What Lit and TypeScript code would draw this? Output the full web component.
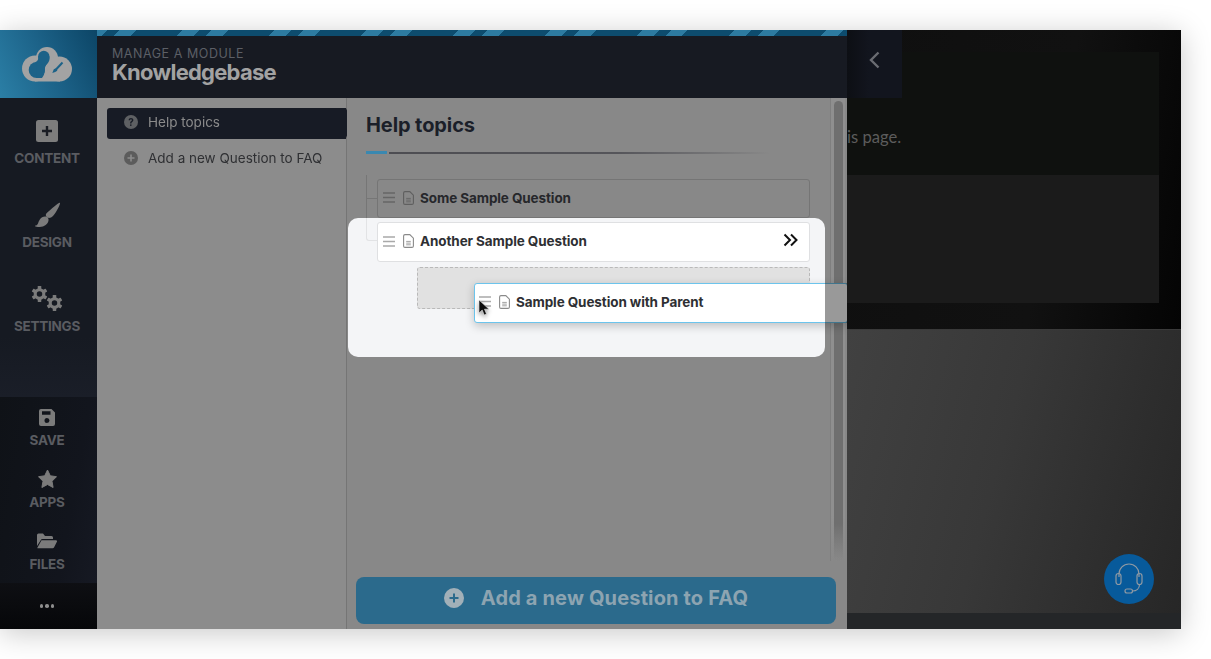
import { LitElement, html, svg, css } from "lit";
import { customElement } from "lit/decorators.js";

const gear = (cx: number, cy: number, r: number) => svg`
  <g transform="translate(${cx} ${cy})">
    ${[0, 60, 120, 180, 240, 300].map(
      (a) => svg`<rect x=${-r * 0.24} y=${-r * 1.08} width=${r * 0.48} height=${r * 0.6} rx="0.6" transform="rotate(${a})"></rect>`
    )}
    <circle r=${r * 0.58} fill="none" stroke="currentColor" stroke-width=${r * 0.42}></circle>
  </g>`;

const handle = () => html`<svg class="handle" width="12" height="11" viewBox="0 0 12 11"><path d="M0 1h12M0 5.500h12M0 10h12" stroke="currentColor" stroke-width="1.400" fill="none"></path></svg>`;
const doc = () => html`<svg class="doc" width="11" height="14" viewBox="0 0 11 14"><path d="M2 .6h4.800l3.600 3.600v7.700a1.500 1.500 0 0 1-1.500 1.500H2a1.500 1.500 0 0 1-1.400-1.500V2.100A1.500 1.500 0 0 1 2 .6z" fill="none" stroke="currentColor" stroke-width="1.100"></path><path d="M3.200 7.400h4.600M3.200 9.100h4.600M3.200 10.800h4.600" stroke="currentColor" stroke-width=".8"></path></svg>`;

@customElement("app-root")
export class AppRoot extends LitElement {
  static styles = css`
    :host { display: block; width: 1211px; height: 659px; background: #fff; padding-top: 30px; box-sizing: border-box; font-family: Inter, "Liberation Sans", sans-serif; overflow: hidden; }
    .stage { display: flex; width: 1181px; height: 599px; box-shadow: 0 4px 28px rgba(0,0,0,.22); filter: blur(.3px); }

    .rail { width: 97px; flex: none; display: flex; flex-direction: column; background: #161a22; }
    .logo { height: 68px; flex: none; display: flex; align-items: center; justify-content: center; padding: 0 3px 0 0; box-sizing: border-box; background: linear-gradient(65deg, #2b7fa6 0%, #1c6288 50%, #0c4566 100%); }
    .main-nav { flex: 1; display: flex; flex-direction: column; padding-top: 22px; gap: 37px; background: linear-gradient(#161a22 80%, #1a1e28); }
    .tools { height: 186px; flex: none; display: flex; flex-direction: column; padding-top: 11px; gap: 21px; box-sizing: border-box; background: linear-gradient(100deg, #0f1217, #12151d 70%, #161923); }
    .more { height: 46px; flex: none; display: flex; align-items: center; justify-content: center; gap: 2px; padding-right: 3px; background: linear-gradient(#0e0f13, #060709); }
    .more i { width: 3.500px; height: 3.500px; border-radius: 50%; background: #8d8d8d; }
    .nav { display: flex; flex-direction: column; align-items: center; padding-right: 3px; color: #5a5c61; font-weight: 700; font-size: 13.500px; letter-spacing: -.25px; line-height: 17px; }
    .nav svg { display: block; }
    .nav .lbl { margin-top: 7px; }
    .main-nav .ico { height: 22px; display: flex; align-items: center; justify-content: center; margin-bottom: 1px; }
    .tools .ico { height: 18px; display: flex; align-items: center; justify-content: center; margin-bottom: 1px; }
    .tools .nav .lbl { margin-top: 5px; }
    .gray { color: #7b7b7b; }

    .panel { width: 750px; flex: none; display: flex; flex-direction: column; position: relative; z-index: 2; }
    .stripe { height: 6px; flex: none; background: repeating-linear-gradient(135deg, #2d7ba1 0 7.750px, #0d4c6e 7.750px 15.600px, #2d7ba1 15.600px 27.600px, #0d4c6e 27.600px 60.800px, #2d7ba1 60.800px 65.050px); }
    .head { height: 62px; flex: none; background: #171a22; padding: 11px 15px 0; box-sizing: border-box; }
    .eyebrow { font-size: 12.500px; letter-spacing: .55px; line-height: 14px; color: #5c5f66; }
    .title { font-size: 22px; line-height: 22px; font-weight: 700; letter-spacing: -.75px; color: #a2a2a2; }
    .body { flex: 1; display: flex; min-height: 0; overflow: hidden; }

    .sub { width: 250px; flex: none; box-sizing: border-box; background: #8c8c8c; border-right: 1px solid #757575; padding: 10px 0 0 10px; }
    .item { display: flex; align-items: center; gap: 10px; height: 31px; box-sizing: border-box; padding: 0 0 4px 17px; font-size: 13.500px; color: #2f3033; margin-bottom: 5px; }
    .item.active { position: relative; width: 239px; background: #171b25; color: #8b8b8b; border-radius: 3px 0 0 3px; }
    .item.active::after { content: ""; position: absolute; left: 100%; top: 0; border-style: solid; border-width: 15.500px 0 15.500px 6px; border-color: transparent transparent transparent #171b25; }
    .item svg { flex: none; }

    .content { flex: 1; position: relative; display: flex; flex-direction: column; background: #888888; box-sizing: border-box; padding: 13px 0 5px 19px; min-width: 0; }
    h1 { position: relative; margin: 0; font-size: 20px; line-height: 28px; font-weight: 700; color: #1b1f29; letter-spacing: -.1px; }
    .rule { display: flex; align-items: center; gap: 2px; margin-top: 12px; height: 3px; width: 404px; }
    .rule b { width: 21px; height: 3px; background: #3a88b0; }
    .rule i { flex: 1; height: 2px; background: linear-gradient(90deg, #4d4d52 0%, #55555a 60%, rgba(85,85,90,0) 100%); }
    .list { display: flex; flex-direction: column; margin: 25px 0 0 11px; width: 433px; }
    .row { position: relative; z-index: 1; display: flex; align-items: center; box-sizing: border-box; border: 1px solid #757575; border-radius: 3px; padding: 0 11px 2px 5px; font-weight: 700; font-size: 13.500px; letter-spacing: -.1px; color: #26272b; }
    .row .handle { margin-right: 8px; flex: none; color: #656565; }
    .row .doc { margin-right: 6px; flex: none; color: #5f5f5f; }
    .r1 { height: 39px; }
    .r2 { height: 40px; margin-top: 4px; background: #fff; border-color: #dfe0e2; color: #2e2f33; }
    .r2 .handle { color: #a9a9a9; }
    .r2 .doc { color: #8a8a8a; }
    .chev { margin-left: auto; margin-top: -3px; }
    .slot { position: relative; z-index: 1; height: 42px; margin: 5px 0 0 40px; box-sizing: border-box; background: #e1e1e1; border: 1px dashed #b9b9b9; border-radius: 3px; }
    .spot { position: absolute; left: 1px; top: 120px; width: 477px; height: 139px; background: #f4f5f7; border-radius: 10px; }
    .tree-a { position: absolute; left: 19px; top: 77px; width: 11px; height: 44px; border-left: 1px solid #767676; }
    .tree-a::after { content: ""; position: absolute; left: 0; top: 23px; width: 11px; border-top: 1px solid #767676; }
    .tree-b { position: absolute; left: 19px; top: 120px; width: 11px; height: 23px; box-sizing: border-box; border-left: 1px solid #e2e3e5; border-bottom: 1px solid #e2e3e5; border-radius: 0 0 0 3px; }
    .drag { position: absolute; z-index: 3; left: 127px; top: 185px; width: 374px; height: 40px; display: flex; align-items: center; box-sizing: border-box; background: #fff; border: 1px solid #6cc4ec; border-radius: 3px; padding: 0 0 3px 4px; font-weight: 700; font-size: 13.500px; letter-spacing: -.1px; color: #2e2f33; box-shadow: 0 3px 10px rgba(0,0,0,.22); }
    .drag .handle { margin-right: 8px; color: #a9a9a9; }
    .drag .doc { margin-right: 6px; color: #8a8a8a; }
    .dim { position: absolute; right: -1px; top: -1px; bottom: -1px; width: 23px; background: rgba(0,0,0,.4); }
    .cursor { position: absolute; left: 3px; top: 15px; filter: drop-shadow(0 2px 2px rgba(0,0,0,.4)); }
    .track { position: absolute; z-index: 0; right: 2px; top: 0; bottom: 68px; width: 15px; box-sizing: border-box; padding: 3px 2px 0 3px; border-left: 1px solid #7f7f7f; background: linear-gradient(#8f8f8f 90%, rgba(143,143,143,0)); }
    .thumb { height: 100%; border-radius: 5px; background: linear-gradient(#6f6f6f 92%, rgba(111,111,111,0)); }
    .add { position: relative; margin: auto 11px 0 -10px; height: 47px; flex: none; box-sizing: border-box; padding-bottom: 6px; display: flex; align-items: center; justify-content: center; gap: 17px; background: #2b6a8c; border-radius: 8px; color: #8da4b1; font-size: 20px; font-weight: 700; letter-spacing: .15px; }

    .page { flex: 1; min-width: 0; position: relative; display: flex; flex-direction: column; overflow: hidden; }
    .dark { height: 299px; flex: none; box-sizing: border-box; padding: 22px 22px 26px 0; background: linear-gradient(100deg, #0f0f0f, #111 60%, #040404), #111; }
    .b1 { height: 123px; box-sizing: border-box; background: #0f110f; font-family: Lato, "Open Sans", sans-serif; font-size: 16.600px; line-height: 24px; color: #5c5c5c; padding: 73px 0 0 0; }
    .b1 span { display: block; }
    .b2 { height: 128px; background: #1b1b1b; }
    .back { position: absolute; left: 0; top: 0; width: 55px; height: 68px; box-sizing: border-box; padding-bottom: 8px; display: flex; align-items: center; justify-content: center; background: linear-gradient(90deg, #0d0f14, #12151e 40%); }
    .light { flex: 1; display: flex; flex-direction: column; background: linear-gradient(105deg, #414141, #383838 45%, #262626); border-top: 1px solid #3a3a3a; }
    .foot { margin-top: auto; height: 16px; background: #242628; }
    .help { position: absolute; left: 257px; top: 524px; width: 50px; height: 50px; border-radius: 50%; display: flex; align-items: center; justify-content: center; background: #075a9b; }
  `;

  render() {
    return html`<div class="stage">
      <aside class="rail">
        <div class="logo">
          <svg width="50" height="35" viewBox="0 0 50 35">
            <g fill="#a3a3a3">
              <circle cx="13" cy="21.500" r="13"></circle>
              <circle cx="25" cy="11" r="11"></circle>
              <circle cx="37.500" cy="22" r="12.500"></circle>
              <rect x="13" y="24" width="25" height="10.500"></rect>
            </g>
            <g fill="#1c6288">
              <circle cx="14.700" cy="23" r="8"></circle>
              <circle cx="21.800" cy="9.500" r="5.700"></circle>
              <path d="M16 9.500c1 3-1 5-3 6l8 8c.5-3 2-4.500 4-6.500 2-2 3-4 2.500-7.500z"></path>
              <path d="M14.700 15c5 0 8 3 8 8s-3 8-8 8z"></path>
              <path d="M26 15.500c-2 2.500-3.300 4.500-3.300 7.500 0 3-1 6-2.700 8h-5v-12z"></path>
            </g>
            <path d="M40.500 15.500 33.500 23" stroke="#1c6288" stroke-width="2"></path>
            <path d="M34 21.500c-1.500 0-2.500 .8-2.800 2.200l-.9 2.300 2.900-.9c1.300-.5 2.300-1.400 2.100-2.300z" fill="#1c6288"></path>
          </svg>
        </div>
        <div class="main-nav">
          <div class="nav"><div class="ico"><svg width="22" height="22" viewBox="0 0 22 22"><rect width="22" height="22" rx="2.500" fill="#7d7d7d"></rect><path d="M11 6v10M6 11h10" stroke="#1a1d24" stroke-width="2.400"></path></svg></div><span class="lbl">CONTENT</span></div>
          <div class="nav"><div class="ico gray"><svg width="27" height="27" viewBox="0 0 27 27"><path d="M26 .8c.6 1-3 8.700-7 13.200-1.500 1.700-3.500 2.200-5 1.800-1.300-.4-2-1.500-2.200-2.600 0-1 .4-1.700 1.500-2.700C17 7.200 25 .1 26 .8z" fill="currentColor"></path><path d="M11 14.500c2 0 4 1.500 3.500 4-.5 3.500-4 6.500-9 6.500-2 0-4.500-.2-4.500-1 0-.4 2-.3 3-2.500 1-2.500 2.500-7 7-7z" fill="currentColor"></path></svg></div><span class="lbl">DESIGN</span></div>
          <div class="nav"><div class="ico gray"><svg width="32" height="26" viewBox="0 0 32 26" fill="currentColor">${gear(8.500, 8, 7.400)}${gear(23.500, 17, 7.400)}</svg></div><span class="lbl">SETTINGS</span></div>
        </div>
        <div class="tools">
          <div class="nav"><div class="ico gray"><svg width="16" height="17" viewBox="0 0 16 17"><path fill-rule="evenodd" d="M2 0h10.500L16 3.500V15a2 2 0 0 1-2 2H2a2 2 0 0 1-2-2V2a2 2 0 0 1 2-2zM3 2.200v3.500h8.500V2.200zM8 9a2.500 2.500 0 1 0 0 5 2.500 2.500 0 0 0 0-5z" fill="currentColor"></path></svg></div><span class="lbl">SAVE</span></div>
          <div class="nav"><div class="ico gray"><svg width="19" height="18" viewBox="0 0 19 18"><path d="M9.500 0l2.800 5.800 6.200.9-4.500 4.500 1.100 6.300-5.600-3-5.600 3 1.100-6.300L.5 6.700l6.200-.9z" fill="currentColor" stroke="currentColor" stroke-linejoin="round"></path></svg></div><span class="lbl">APPS</span></div>
          <div class="nav"><div class="ico gray"><svg width="20" height="16" viewBox="0 0 20 16"><path d="M0 13V2a1.500 1.500 0 0 1 1.500-1.500H6L8 3h6.500A1.500 1.500 0 0 1 16 4.500V6H5.500a2 2 0 0 0-1.800 1.200z" fill="currentColor"></path><path d="M4.500 7.300H19a1 1 0 0 1 .9 1.400L17 14.500a1.500 1.500 0 0 1-1.300.8H1a.6.6 0 0 1-.5-.9z" fill="currentColor"></path></svg></div><span class="lbl">FILES</span></div>
        </div>
        <div class="more"><i></i><i></i><i></i></div>
      </aside>

      <section class="panel">
        <div class="stripe"></div>
        <header class="head">
          <div class="eyebrow">MANAGE A MODULE</div>
          <div class="title">Knowledgebase</div>
        </header>
        <div class="body">
          <nav class="sub">
            <div class="item active">
              <svg width="14" height="14" viewBox="0 0 14 14"><circle cx="7" cy="7" r="7" fill="#5e6063"></circle><text x="7" y="10.500" text-anchor="middle" font-size="10" font-weight="700" font-family="Inter" fill="#171b25">?</text></svg>
              <span>Help topics</span>
            </div>
            <div class="item">
              <svg width="14" height="14" viewBox="0 0 14 14"><circle cx="7" cy="7" r="7" fill="#5c5c5c"></circle><path d="M7 3.500v7M3.500 7h7" stroke="#8c8c8c" stroke-width="1.600"></path></svg>
              <span>Add a new Question to FAQ</span>
            </div>
          </nav>
          <main class="content">
            <div class="track"><div class="thumb"></div></div>
            <h1>Help topics</h1>
            <div class="rule"><b></b><i></i></div>
            <div class="spot"></div>
            <div class="tree-a"></div>
            <div class="tree-b"></div>
            <div class="list">
              <div class="row r1">${handle()}${doc()}<span>Some Sample Question</span></div>
              <div class="row r2">${handle()}${doc()}<span>Another Sample Question</span>
                <svg class="chev" width="15" height="14" viewBox="0 0 15 14"><path d="M1.500 1.500 7 7l-5.500 5.500M8 1.500 13.500 7 8 12.500" fill="none" stroke="#111" stroke-width="2"></path></svg>
              </div>
              <div class="slot"></div>
            </div>
            <div class="drag">
              ${handle()}${doc()}<span>Sample Question with Parent</span>
              <div class="dim"></div>
              <svg class="cursor" width="12" height="18" viewBox="0 0 12 18"><path d="M1 1v13l3.200-3 2 5 2.300-1-2-4.800h4.500z" fill="#0b0b0b" stroke="#e8e8e8" stroke-width=".6"></path></svg>
            </div>
            <div class="add">
              <svg width="20" height="20" viewBox="0 0 20 20"><circle cx="10" cy="10" r="10" fill="#a2b0b8"></circle><path d="M10 5.500v9M5.500 10h9" stroke="#2b6a8c" stroke-width="2"></path></svg>
              <span>Add a new Question to FAQ</span>
            </div>
          </main>
        </div>
      </section>

      <section class="page">
        <div class="dark">
          <div class="b1"><span>is page.</span></div>
          <div class="b2"></div>
        </div>
        <div class="light"><div class="foot"></div></div>
        <div class="back"><svg width="11" height="18" viewBox="0 0 11 18"><path d="M9.500 1.500 2 9l7.500 7.500" fill="none" stroke="#6a6c72" stroke-width="2.400"></path></svg></div>
        <div class="help"><svg width="28" height="32" viewBox="0 0 28 32" fill="none" stroke="#8f99a3" stroke-width="1.200"><path d="M4 14V11a10 10 0 0 1 20 0v3"></path><rect x="1" y="10.500" width="5" height="11" rx="2.500"></rect><rect x="22" y="10.500" width="5" height="11" rx="2.500"></rect><path d="M24.500 21.500c0 4-3 6.500-7 6.500"></path><rect x="10" y="26" width="7.500" height="4" rx="2"></rect></svg></div>
      </section>
    </div>`;
  }
}
